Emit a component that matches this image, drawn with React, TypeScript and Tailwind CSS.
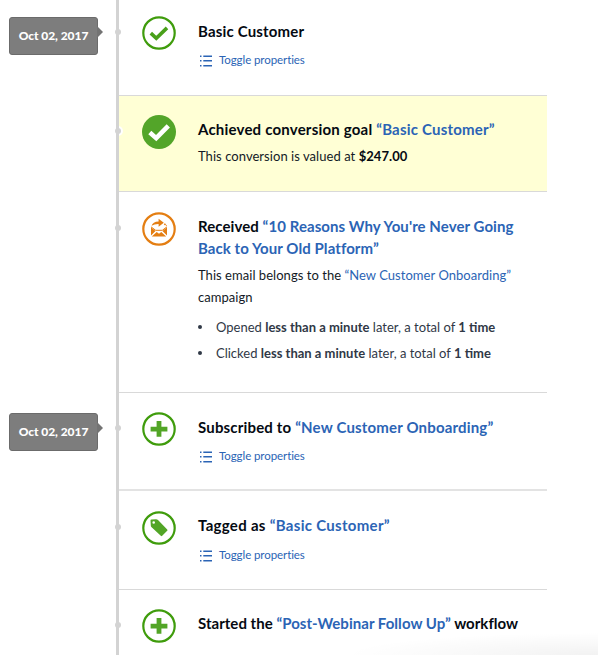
import React from "react";

type IconName = "check" | "checkSolid" | "mail" | "plus" | "tag";

function EventIcon({ name }: { name: IconName }) {
  const stroke = name === "mail" ? "#e47e12" : "#3f9c0c";
  return (
    <svg width="34" height="34" viewBox="0 0 34 34" className="block shrink-0">
      {name === "checkSolid" ? (
        <>
          <circle cx="17" cy="17" r="17" fill="#53a529" />
          <path d="M7.8 17.6 14.2 23.2 26.3 10.8" fill="none" stroke="#fff" strokeWidth="4.6" />
        </>
      ) : (
        <circle cx="17" cy="17" r="15.7" fill="#fff" stroke={stroke} strokeWidth="2.2" />
      )}
      {name === "check" && (
        <path d="M8.8 17.1 14.3 22.2 25 11.9" fill="none" stroke="#49a01a" strokeWidth="3.6" />
      )}
      {name === "plus" && <path d="M14.6 8.9h4.8v5.8h6v4.7h-6v5.4h-4.8v-5.4h-6v-4.7h6z" fill="#52a526" />}
      {name === "tag" && (
        <path
          fillRule="evenodd"
          d="M9.3 8.6 14 8.3q1.2 0 2 .8l9.2 9.3q.7.7 0 1.4l-5 5q-.7.7-1.4 0l-9.2-8.5q-.8-.8-.8-1.8L8.5 9.5q0-.8.8-.9ZM11.7 10.2a1.3 1.3 0 1 0 0 2.6 1.3 1.3 0 0 0 0-2.6Z"
          fill="#52a526"
        />
      )}
      {name === "mail" && (
        <>
          <path d="M9.6 13.7q1.2-4.1 7-4.3V6.8l5.2 4-5.2 4v-2.7q-4.1-.1-7 1.6Z" fill="#e47e12" />
          <path d="m22.3 11.7 2.3 2.1" stroke="#e47e12" strokeWidth="1.5" strokeDasharray="1.7 .8" />
          <path d="m9 15.3 4.5 3.8L9 23.6zM25 15.3l-4.5 3.8 4.5 4.5zM9.8 24.5l4.9-4.6L17 21.7l2.3-1.8 4.9 4.6z" fill="#e47e12" />
          <path d="m9.1 14.9 4.6 3.4h6.6l4.6-3.4" fill="none" stroke="#e47e12" strokeWidth="1" />
        </>
      )}
    </svg>
  );
}

function DateBadge({ offset }: { offset: string }) {
  return (
    <div
      className={`relative ml-[9px] flex h-[38px] w-[89px] items-center justify-center rounded-[3px] border border-[#6b6b6b] bg-[#7d7d7d] text-[12px] font-black text-white ${offset}`}
    >
      <span className="whitespace-nowrap tracking-[-0.05px]">Oct 02, 2017</span>
      <svg width="7" height="12" viewBox="0 0 7 12" className="absolute -right-[7px] top-[8px]">
        <path d="M0 0 6 6 0 12z" fill="#737373" />
      </svg>
    </div>
  );
}

function Toggle() {
  return (
    <div className="mt-[9px] flex h-[18px] items-center text-[11.5px] leading-[18px] text-[#2b64b5]">
      <svg width="12" height="12" viewBox="0 0 12 12" className="ml-[2px] mr-[7px] mt-[2px]" fill="#2b64b5">
        <path d="M0 .5h1.5V2H0zM3.3.5H12V2H3.3zM0 5h1.5v1.5H0zM3.3 5H12v1.5H3.3zM0 10h1.5v1.5H0zM3.3 10H12v1.5H3.3z" />
      </svg>
      <span className="tracking-[-0.08px]">Toggle properties</span>
    </div>
  );
}

interface EventProps {
  icon: IconName;
  height: string;
  badge?: string;
  pad?: string;
  body?: string;
  children: React.ReactNode;
}

function Event({ icon, height, badge, pad = "pt-[20px]", body = "border-b border-[#d9d9d9]", children }: EventProps) {
  return (
    <div className={`flex ${height}`}>
      <div className="w-[116px] shrink-0">{badge && <DateBadge offset={badge} />}</div>
      <div className={`relative w-[3px] shrink-0 ${pad}`}>
        <div className="relative -ml-[1px] mt-[13px] h-[6px] w-[6px] rounded-full bg-[#d3d3d3] ring-2 ring-white" />
        <div className="absolute inset-0 bg-[#d3d3d3]" />
      </div>
      <div className={`flex w-[428px] shrink-0 pl-[23px] ${pad} ${body}`}>
        <EventIcon name={icon} />
        <div className="ml-[22px] flex-1 whitespace-nowrap">{children}</div>
      </div>
    </div>
  );
}

function Title({ children, fit = "mt-[4px] tracking-[0.17px]" }: { children: React.ReactNode; fit?: string }) {
  return <h3 className={`text-[15px] font-bold leading-[22px] text-[#050a12] ${fit}`}>{children}</h3>;
}

const link = "text-[#2b64b5]";

export default function App() {
  return (
    <div className="relative h-[655px] w-[598px] overflow-hidden bg-white font-['Lato',sans-serif]">
      <Event icon="check" height="h-[96px]" badge="mt-[17px]" pad="pt-[16px]">
        <Title>Basic Customer</Title>
        <Toggle />
      </Event>
      <Event icon="checkSolid" height="h-[96px]" pad="pt-[19px]" body="border-b border-[#d9d9d9] bg-[#ffffd5]">
        <Title fit="mt-[3px] tracking-[0.2px]">
          Achieved conversion goal <a className={link}>“Basic Customer”</a>
        </Title>
        <p className="mt-[5px] text-[13px] leading-[22px] tracking-[0.05px] text-[#131a26]">
          This conversion is valued at <b className="font-bold text-[#050a12]">$247.00</b>
        </p>
      </Event>
      <Event icon="mail" height="h-[201px]">
        <Title fit="mt-[3px] tracking-[0.07px]">
          Received{" "}
          <a className={link}>
            “10 Reasons Why You're Never Going
            <br />
            Back to Your Old Platform”
          </a>
        </Title>
        <p className="mt-[5px] text-[13px] leading-[22px] tracking-[0.04px] text-[#131a26]">
          This email belongs to the <a className={link}>“New Customer Onboarding”</a>
          <br />
          campaign
        </p>
        <ul className="mt-[6px] text-[13px] leading-[26px] text-[#303846]">
          {["Opened", "Clicked"].map((action) => (
            <li key={action} className="flex items-center">
              <span className="mr-[14px] h-[4px] w-[4px] rounded-full bg-[#303846]" />
              <span>
                {action} <b>less than a minute</b> later, a total of <b>1 time</b>
              </span>
            </li>
          ))}
        </ul>
      </Event>
      <Event icon="plus" height="h-[98px]" badge="mt-[20px]" pad="pt-[19px]" body="border-b-2 border-[#e3e3e3]">
        <Title>
          Subscribed to <a className={link}>“New Customer Onboarding”</a>
        </Title>
        <Toggle />
      </Event>
      <Event icon="tag" height="h-[99px]">
        <Title fit="mt-[3px] mb-[10px] tracking-[0.3px]">
          Tagged as <a className={link}>“Basic Customer”</a>
        </Title>
        <Toggle />
      </Event>
      <Event icon="plus" height="h-[65px]" pad="pt-[19px]" body="">
        <Title fit="mt-[3px] tracking-[0.03px]">
          Started the <a className={link}>“Post-Webinar Follow Up”</a> workflow
        </Title>
      </Event>
      <div className="pointer-events-none absolute bottom-0 right-0 h-[22px] w-[250px] bg-[radial-gradient(ellipse_at_bottom_right,rgba(0,0,0,0.05),transparent_72%)]" />
    </div>
  );
}
